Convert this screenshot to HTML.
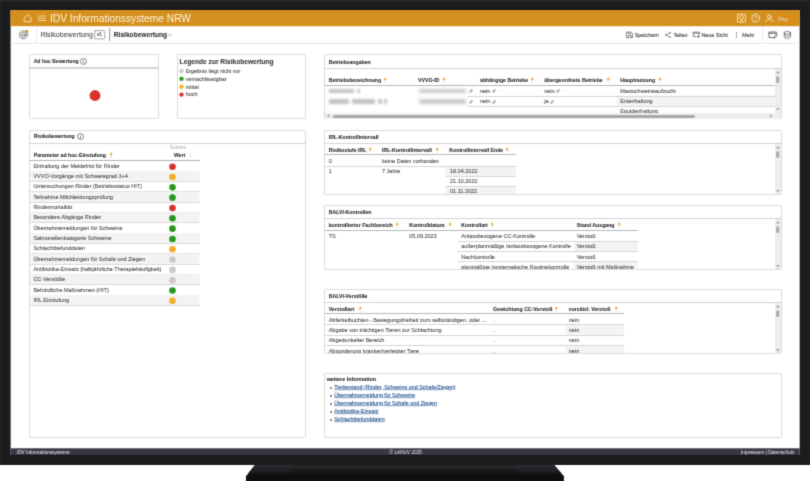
<!DOCTYPE html>
<html lang="de">
<head>
<meta charset="utf-8">
<title>IDV Informationssysteme NRW – Risikobewertung</title>
<style>
html,body{margin:0;padding:0;background:#fff;}
body{width:810px;height:481px;position:relative;overflow:hidden;font-family:"Liberation Sans",sans-serif;}
*{box-sizing:border-box;}
.abs,.t,.b,.h,.p,.ln,.bg,.ar,.lk{position:absolute;}
.bezel{left:0;top:0;width:810px;height:464.5px;background:#1c1c1e;border-top:1px solid #2b2d2d;border-left:1px solid #242526;}
.screen{left:10.5px;top:10px;width:790px;height:445px;background:#fff;outline:1px solid #15151d;}
.obar{left:10.5px;top:10px;width:790px;height:16.2px;background:#d4901f;}
.tbar{left:10.5px;top:26px;width:790px;height:17.3px;background:#fff;border-bottom:1px solid #e2e2e2;}
.foot{left:10.5px;top:448.3px;width:790px;height:6.7px;background:#383845;}
.t{white-space:nowrap;font-size:5.5px;line-height:8px;color:#565656;-webkit-text-stroke:0.12px #565656;}
.b{white-space:nowrap;font-size:5.2px;line-height:8px;color:#2b2b30;font-weight:bold;-webkit-text-stroke:0.08px #2b2b30;}
.p{border:1px solid #dcdcdc;background:#fff;border-radius:1.2px;}
.ln{height:1px;background:#dcdcdc;}
.hd{background:#d4d4d4;height:1.4px;}
.bg{background:#f3f3f3;}
.t,.b,.lk{transform:scaleY(1.1);transform-origin:50% 58%;}
.big{transform:none;}
.ar{width:2.4px;height:4.6px;}
.lk{white-space:nowrap;font-size:5.5px;line-height:8px;color:#24528f;-webkit-text-stroke:0.1px #24528f;text-decoration:underline;text-decoration-thickness:0.4px;text-underline-offset:0.2px;text-decoration-color:rgba(45,95,158,0.55);}
.ft{color:#e8e8ee;font-size:4.74px;line-height:7px;-webkit-text-stroke:0;}
svg{position:absolute;overflow:visible;}
</style>
</head>
<body>
<svg width="0" height="0" style="position:absolute"><defs><filter id="soft" x="0" y="0" width="100%" height="100%" color-interpolation-filters="sRGB"><feConvolveMatrix order="3" kernelMatrix="0.0192 0.1001 0.0192 0.1001 0.5228 0.1001 0.0192 0.1001 0.0192" edgeMode="duplicate" preserveAlpha="false"/></filter></defs></svg>
<div class="abs" style="left:0;top:0;width:810px;height:481px;filter:url(#soft);">
<svg style="left:0;top:0" width="810" height="481" viewBox="0 0 810 481">
<defs>
<linearGradient id="sg" gradientUnits="userSpaceOnUse" x1="0" y1="464.6" x2="0" y2="481"><stop offset="0" stop-color="#262629"/><stop offset="0.24" stop-color="#242427"/><stop offset="0.28" stop-color="#1b1b1e"/><stop offset="0.52" stop-color="#17171a"/><stop offset="0.64" stop-color="#0e0e11"/><stop offset="1" stop-color="#111114"/></linearGradient>
<linearGradient id="sl" gradientUnits="userSpaceOnUse" x1="0" y1="464" x2="0" y2="473.5"><stop offset="0" stop-color="#2f2f34"/><stop offset="1" stop-color="#18181b"/></linearGradient>
</defs>
<polygon points="255.7,464 553.3,464 563.9,476.2 563.9,488 246,488 246,476.2" fill="url(#sg)"/>
<polygon points="255.7,464 291.5,464 291.5,473.5 248.1,473.5" fill="url(#sl)"/>
<polygon points="518.5,464 553.3,464 561.6,473.5 518.5,473.5" fill="url(#sl)"/>
</svg>
<svg style="left:0;top:0" width="810" height="481" viewBox="0 0 810 481">
<rect x="-6" y="-6" width="822" height="471" fill="#1c1c1e"/>
<rect x="-6" y="-6" width="822" height="7.2" fill="#2c2e2e"/>
<rect x="-6" y="1.2" width="7" height="463.8" fill="#242527"/>
<rect x="809" y="1.2" width="7" height="463.8" fill="#212123"/>
<rect x="9.8" y="9.3" width="790.7" height="446.4" fill="#14141d"/>
<rect x="10.6" y="10" width="789.1" height="445" fill="#ffffff"/>
<rect x="10.6" y="10" width="789.1" height="16.2" fill="#d4901f"/>
<rect x="10.6" y="42.8" width="789.1" height="0.9" fill="#e3e3e3"/>
<rect x="10.6" y="448.3" width="789.1" height="6.7" fill="#383845"/>
</svg>
<svg style="left:0;top:0" width="810" height="60" viewBox="0 0 810 60" fill="none" stroke="#fbe8c6" stroke-width="0.9" stroke-linejoin="round" stroke-linecap="round">
<path d="M24.5 17.6 L27.7 14.9 L30.9 17.6 V21.7 H24.5 Z" stroke-width="0.8"/>
<path d="M38.2 16.1 H45.6 M38.2 18.35 H45.6 M38.2 20.6 H45.6" stroke-width="0.8"/>
<rect x="737.5" y="14.3" width="8" height="7.8" rx="0.5"/>
<circle cx="741.5" cy="17.7" r="1.9" stroke-width="0.8"/><path d="M741.5 19.6 V21 M740.4 21 H742.6" stroke-width="0.8"/>
<circle cx="755.7" cy="18.2" r="4"/>
<path d="M754.5 17.1 C754.5 15.7 756.9 15.7 756.9 17.1 C756.9 18 755.7 18 755.7 19.1 M755.7 20.3 V20.5" stroke-width="0.75"/>
<circle cx="769.3" cy="16.6" r="1.8"/><path d="M765.7 21.6 C765.7 19.7 767.4 19.2 769.3 19.2 C771.2 19.2 772.9 19.7 772.9 21.6"/>
</svg>
<div class="t" style="left:49.9px;top:12px;font-size:10px;line-height:13px;color:#fdf3df;-webkit-text-stroke:0;transform:scaleX(1.02);transform-origin:0 50%;">IDV Informationssysteme NRW</div>
<svg style="left:0;top:0" width="810" height="30" viewBox="0 0 810 30"><rect x="774.6" y="14.9" width="18.4" height="8" rx="4" fill="#de8c12"/></svg>
<div class="b" style="left:777.8px;top:14.9px;font-size:5.6px;color:#fbe9cc;transform:scale(0.86,1.05);transform-origin:0 50%;">Disy</div>
<svg style="left:0;top:0" width="810" height="60" viewBox="0 0 810 60" fill="none" stroke="#666" stroke-width="0.8" stroke-linejoin="round" stroke-linecap="round">
<circle cx="23.5" cy="34.8" r="4.1" stroke="#6a6a70" stroke-width="0.7"/><circle cx="23.5" cy="34.8" r="2.6" stroke="#6a6a70" stroke-width="0.7"/><circle cx="23.5" cy="34.8" r="1.1" stroke="#6a6a70" stroke-width="0.7"/>
<circle cx="26.8" cy="31.4" r="1.5" fill="#e08a12" stroke="none"/>
<path d="M36.6 26.5 V43" stroke="#e6e6e6" stroke-width="0.8"/>
<rect x="94.7" y="30.6" width="10" height="8.3" rx="0.8" stroke="#808080" stroke-width="0.7"/>
<path d="M109.7 28.4 V40.8" stroke="#7c7c7c" stroke-width="0.8"/>
<path d="M168.4 34.3 L169.9 35.7 L171.4 34.3" stroke="#666" stroke-width="0.6"/>
<path d="M626.8 32.1 H631.3 L632.6 33.4 V37.6 H626.8 Z M628 32.1 V33.8 H630.8 V32.1 M628 37.6 V35.4 H631.4 V37.6" stroke-width="0.7"/>
<circle cx="670" cy="32.7" r="0.75" fill="#666" stroke="none"/><circle cx="665.9" cy="34.9" r="0.75" fill="#666" stroke="none"/><circle cx="670" cy="37.1" r="0.75" fill="#666" stroke="none"/>
<path d="M670 32.7 L665.9 34.9 L670 37.1" stroke-width="0.7"/>
<path d="M696.3 36.4 H693.2 V32.2 H699.4 V34.6 M693.2 33.2 H699.4 M698.5 35.4 V37.6 M697.4 36.5 H699.6" stroke-width="0.8"/>
<circle cx="736.5" cy="32.7" r="0.6" fill="#666" stroke="none"/><circle cx="736.5" cy="34.8" r="0.6" fill="#666" stroke="none"/><circle cx="736.5" cy="36.9" r="0.6" fill="#666" stroke="none"/>
<path d="M762.7 26.5 V43" stroke="#e2e2e2" stroke-width="0.8"/>
<path d="M773.3 37.5 H769 V32 H776.3 V33.6 M769 33.3 H776.3 M774.2 37.9 L774.5 36.5 L776.6 34.4 L777.4 35.2 L775.3 37.4 Z" stroke="#555" stroke-width="0.85"/>
<ellipse cx="787.4" cy="32.8" rx="3.1" ry="1.35" stroke="#555" stroke-width="0.75"/>
<path d="M784.3 32.8 V36.9 C784.3 38.7 790.5 38.7 790.5 36.9 V32.8 M784.3 34.8 C784.3 36.6 790.5 36.6 790.5 34.8" stroke="#555" stroke-width="0.75"/>
</svg>
<div class="t big" style="left:40.4px;top:29.7px;font-size:7.1px;line-height:10px;color:#555;">Risikobewertung</div>
<div class="t" style="left:97px;top:31.3px;font-size:4.7px;color:#555;-webkit-text-stroke:0.2px #555;">v1</div>
<div class="b big" style="left:113.8px;top:29.7px;font-size:6.62px;line-height:10px;color:#333;">Risikobewertung</div>
<div class="t" style="left:634.8px;top:30.8px;font-size:5.37px;color:#5c5c5c;-webkit-text-stroke:0.2px #5c5c5c;">Speichern</div>
<div class="t" style="left:673.4px;top:30.8px;font-size:5.37px;color:#5c5c5c;-webkit-text-stroke:0.2px #5c5c5c;">Teilen</div>
<div class="t" style="left:701.5px;top:30.8px;font-size:5.37px;color:#5c5c5c;-webkit-text-stroke:0.2px #5c5c5c;">Neue Sicht</div>
<div class="t" style="left:742.2px;top:30.8px;font-size:5.37px;color:#5c5c5c;-webkit-text-stroke:0.2px #5c5c5c;">Mehr</div>
<div class="p" style="left:29.3px;top:54.2px;width:130px;height:65.3px;"></div>
<div class="ln hd" style="left:29.3px;top:67.3px;width:130px;"></div>
<div class="b" style="left:33.7px;top:57.2px;font-size:5.1px;">Ad hoc Bewertung</div>
<svg style="left:80.1px;top:57.7px" width="7" height="7" viewBox="0 0 7 7" fill="none" stroke="#4a4a4a" stroke-width="0.7"><circle cx="3.5" cy="3.5" r="2.95"/><path d="M3.5 3.1 V5.2 M3.5 1.8 V2.3" stroke-width="0.7"/></svg>
<div class="p" style="left:177px;top:54.2px;width:129.3px;height:65.3px;"></div>
<div class="b big" style="left:179.6px;top:56.7px;font-size:6.62px;line-height:10px;color:#38383f;">Legende zur Risikobewertung</div>
<div class="t" style="left:185.7px;top:66.80px;font-size:5.42px;">Ergebnis liegt nicht vor</div>
<div class="t" style="left:185.7px;top:74.67px;font-size:5.42px;">vernachlässigbar</div>
<div class="t" style="left:185.7px;top:82.54px;font-size:5.42px;">mittel</div>
<div class="t" style="left:185.7px;top:90.41px;font-size:5.42px;">hoch</div>
<div class="p" style="left:29.3px;top:130.3px;width:277px;height:307.6px;"></div>
<div class="ln hd" style="left:29.3px;top:143px;width:277px;"></div>
<div class="b" style="left:33.7px;top:132.4px;font-size:5.1px;">Risikobewertung</div>
<svg style="left:76.8px;top:132.9px" width="7" height="7" viewBox="0 0 7 7" fill="none" stroke="#4a4a4a" stroke-width="0.7"><circle cx="3.5" cy="3.5" r="2.95"/><path d="M3.5 3.1 V5.2 M3.5 1.8 V2.3" stroke-width="0.7"/></svg>
<div class="t" style="left:170.1px;top:143.7px;font-size:4.64px;color:#9e9e9e;-webkit-text-stroke:0;">Summe</div>
<div class="b" style="left:33.7px;top:151.2px;">Parameter ad hoc-Einstufung</div>
<svg class="ar" style="left:109.5px;top:152.9px" viewBox="0 0 2.4 4.6"><path d="M1.2 -0.8 L2.75 1.7 H-0.35 Z" fill="#f09a1c"/><rect x="0.6" y="1.6" width="1.2" height="0.9" fill="#f2a636"/><rect x="0.7" y="2.5" width="1" height="2.1" fill="#d9d9d9"/></svg>
<div class="b" style="left:174px;top:151.2px;">Wert</div>
<svg style="left:190.2px;top:152.8px" width="1.4" height="4.4" viewBox="0 0 1.4 4.4"><path d="M0.7 0 L1.4 1.3 H0 Z M0.7 4.4 L1.4 3.1 H0 Z" fill="#d0d0d0"/><rect x="0.45" y="1.3" width="0.5" height="1.8" fill="#d8d8d8"/></svg>
<div class="ln" style="left:29.8px;top:159.9px;width:169.8px;background:#b2b2b2;"></div>
<div class="ln" style="left:30.3px;top:170.72px;width:169.3px;background:#dadada;"></div>
<div class="t" style="left:33.4px;top:161.66px;">Einhaltung der Meldefrist für Rinder</div>
<svg style="left:0;top:0" width="810" height="481" viewBox="0 0 810 481"><rect x="30.3" y="171.02" width="169.3" height="10.32" fill="#f3f3f3"/></svg>
<div class="ln" style="left:30.3px;top:181.04px;width:169.3px;background:#dadada;"></div>
<div class="t" style="left:33.4px;top:171.98px;">VVVO-Vorgänge mit Schweregrad 3+4</div>
<div class="ln" style="left:30.3px;top:191.36px;width:169.3px;background:#dadada;"></div>
<div class="t" style="left:33.4px;top:182.30px;">Untersuchungen Rinder (Betriebsstatus HIT)</div>
<svg style="left:0;top:0" width="810" height="481" viewBox="0 0 810 481"><rect x="30.3" y="191.66" width="169.3" height="10.32" fill="#f3f3f3"/></svg>
<div class="ln" style="left:30.3px;top:201.68px;width:169.3px;background:#dadada;"></div>
<div class="t" style="left:33.4px;top:192.62px;">Teilnahme Milchleistungsprüfung</div>
<div class="ln" style="left:30.3px;top:212.00px;width:169.3px;background:#dadada;"></div>
<div class="t" style="left:33.4px;top:202.94px;">Rindermortalität</div>
<svg style="left:0;top:0" width="810" height="481" viewBox="0 0 810 481"><rect x="30.3" y="212.30" width="169.3" height="10.32" fill="#f3f3f3"/></svg>
<div class="ln" style="left:30.3px;top:222.32px;width:169.3px;background:#dadada;"></div>
<div class="t" style="left:33.4px;top:213.26px;">Besondere Abgänge Rinder</div>
<div class="ln" style="left:30.3px;top:232.64px;width:169.3px;background:#dadada;"></div>
<div class="t" style="left:33.4px;top:223.58px;">Übernahmemeldungen für Schweine</div>
<svg style="left:0;top:0" width="810" height="481" viewBox="0 0 810 481"><rect x="30.3" y="232.94" width="169.3" height="10.32" fill="#f3f3f3"/></svg>
<div class="ln" style="left:30.3px;top:242.96px;width:169.3px;background:#dadada;"></div>
<div class="t" style="left:33.4px;top:233.90px;">Salmonellenkategorie Schweine</div>
<div class="ln" style="left:30.3px;top:253.28px;width:169.3px;background:#dadada;"></div>
<div class="t" style="left:33.4px;top:244.22px;">Schlachtbefunddaten</div>
<svg style="left:0;top:0" width="810" height="481" viewBox="0 0 810 481"><rect x="30.3" y="253.58" width="169.3" height="10.32" fill="#f3f3f3"/></svg>
<div class="ln" style="left:30.3px;top:263.60px;width:169.3px;background:#dadada;"></div>
<div class="t" style="left:33.4px;top:254.54px;">Übernahmemeldungen für Schafe und Ziegen</div>
<div class="ln" style="left:30.3px;top:273.92px;width:169.3px;background:#dadada;"></div>
<div class="t" style="left:33.4px;top:264.86px;">Antibiotika-Einsatz (halbjährliche Therapiehäufigkeit)</div>
<svg style="left:0;top:0" width="810" height="481" viewBox="0 0 810 481"><rect x="30.3" y="274.22" width="169.3" height="10.32" fill="#f3f3f3"/></svg>
<div class="ln" style="left:30.3px;top:284.24px;width:169.3px;background:#dadada;"></div>
<div class="t" style="left:33.4px;top:275.18px;">CC-Verstöße</div>
<div class="ln" style="left:30.3px;top:294.56px;width:169.3px;background:#dadada;"></div>
<div class="t" style="left:33.4px;top:285.50px;">Behördliche Maßnahmen (HIT)</div>
<svg style="left:0;top:0" width="810" height="481" viewBox="0 0 810 481"><rect x="30.3" y="294.86" width="169.3" height="10.32" fill="#f3f3f3"/></svg>
<div class="ln" style="left:30.3px;top:304.88px;width:169.3px;background:#dadada;"></div>
<div class="t" style="left:33.4px;top:295.82px;">IRL Einstufung</div>
<div class="p" style="left:324.3px;top:54.2px;width:457.3px;height:65.3px;"></div>
<div class="ln hd" style="left:324.3px;top:67.8px;width:457.3px;"></div>
<div class="b" style="left:328.7px;top:57.70px;">Betriebsangaben</div>
<div class="b" style="left:328.7px;top:76.00px;">Betriebsbezeichnung</div>
<svg class="ar" style="left:384.4px;top:78.1px" viewBox="0 0 2.4 4.6"><path d="M1.2 -0.8 L2.75 1.7 H-0.35 Z" fill="#f09a1c"/><rect x="0.6" y="1.6" width="1.2" height="0.9" fill="#f2a636"/><rect x="0.7" y="2.5" width="1" height="2.1" fill="#d9d9d9"/></svg>
<div class="b" style="left:418px;top:76.00px;">VVVO-ID</div>
<svg class="ar" style="left:443.4px;top:78.1px" viewBox="0 0 2.4 4.6"><path d="M1.2 -0.8 L2.75 1.7 H-0.35 Z" fill="#f09a1c"/><rect x="0.6" y="1.6" width="1.2" height="0.9" fill="#f2a636"/><rect x="0.7" y="2.5" width="1" height="2.1" fill="#d9d9d9"/></svg>
<div class="b" style="left:480px;top:76.00px;">abhängige Betriebe</div>
<svg class="ar" style="left:530.9px;top:78.1px" viewBox="0 0 2.4 4.6"><path d="M1.2 -0.8 L2.75 1.7 H-0.35 Z" fill="#f09a1c"/><rect x="0.6" y="1.6" width="1.2" height="0.9" fill="#f2a636"/><rect x="0.7" y="2.5" width="1" height="2.1" fill="#d9d9d9"/></svg>
<div class="b" style="left:544.2px;top:76.00px;">übergeordnete Betriebe</div>
<svg class="ar" style="left:606.9px;top:78.1px" viewBox="0 0 2.4 4.6"><path d="M1.2 -0.8 L2.75 1.7 H-0.35 Z" fill="#f09a1c"/><rect x="0.6" y="1.6" width="1.2" height="0.9" fill="#f2a636"/><rect x="0.7" y="2.5" width="1" height="2.1" fill="#d9d9d9"/></svg>
<div class="b" style="left:620.2px;top:76.00px;">Hauptnutzung</div>
<svg class="ar" style="left:659.0px;top:78.1px" viewBox="0 0 2.4 4.6"><path d="M1.2 -0.8 L2.75 1.7 H-0.35 Z" fill="#f09a1c"/><rect x="0.6" y="1.6" width="1.2" height="0.9" fill="#f2a636"/><rect x="0.7" y="2.5" width="1" height="2.1" fill="#d9d9d9"/></svg>
<div class="ln" style="left:324.8px;top:85.2px;width:450.2px;background:#b8b8b8;"></div>
<svg style="left:0;top:0" width="810" height="481" viewBox="0 0 810 481"><rect x="617" y="95.5" width="157.8" height="10.2" fill="#f3f3f3"/></svg>
<div class="ln" style="left:467px;top:95.6px;width:308px;background:#d6d6d6;"></div>
<div class="ln" style="left:467px;top:105.9px;width:308px;background:#d6d6d6;"></div>
<div class="abs" style="left:329px;top:88.90px;width:25px;height:4.4px;background:#c4c4c4;filter:blur(1.2px);"></div>
<div class="abs" style="left:356.5px;top:88.90px;width:3px;height:4.4px;background:#c4c4c4;filter:blur(1.2px);"></div>
<div class="abs" style="left:329px;top:99.20px;width:20px;height:4.4px;background:#c4c4c4;filter:blur(1.2px);"></div>
<div class="abs" style="left:352px;top:99.20px;width:23px;height:4.4px;background:#c4c4c4;filter:blur(1.2px);"></div>
<div class="abs" style="left:377.5px;top:99.20px;width:4px;height:4.4px;background:#c4c4c4;filter:blur(1.2px);"></div>
<div class="abs" style="left:384px;top:99.20px;width:3px;height:4.4px;background:#c4c4c4;filter:blur(1.2px);"></div>
<div class="abs" style="left:418px;top:87.70px;width:49px;height:6.6px;background:#e9e9e9;filter:blur(0.8px);"></div>
<div class="abs" style="left:421px;top:89.70px;width:44px;height:2.6px;background:#c6c6c6;filter:blur(1.0px);"></div>
<div class="abs" style="left:418px;top:98.00px;width:49px;height:6.6px;background:#e9e9e9;filter:blur(0.8px);"></div>
<div class="abs" style="left:421px;top:100.00px;width:44px;height:2.6px;background:#c6c6c6;filter:blur(1.0px);"></div>
<svg style="left:468.5px;top:89.2px" width="4" height="4" viewBox="0 0 4 4" fill="none" stroke="#6c6c6c" stroke-width="0.5"><ellipse cx="1.45" cy="2.55" rx="1.15" ry="0.72" transform="rotate(-45 1.45 2.55)"/><ellipse cx="2.55" cy="1.45" rx="1.15" ry="0.72" transform="rotate(-45 2.55 1.45)"/></svg>
<div class="t" style="left:480px;top:86.90px;">nein</div>
<svg style="left:491.9px;top:89.2px" width="4" height="4" viewBox="0 0 4 4" fill="none" stroke="#6c6c6c" stroke-width="0.5"><ellipse cx="1.45" cy="2.55" rx="1.15" ry="0.72" transform="rotate(-45 1.45 2.55)"/><ellipse cx="2.55" cy="1.45" rx="1.15" ry="0.72" transform="rotate(-45 2.55 1.45)"/></svg>
<svg style="left:468.5px;top:99.5px" width="4" height="4" viewBox="0 0 4 4" fill="none" stroke="#6c6c6c" stroke-width="0.5"><ellipse cx="1.45" cy="2.55" rx="1.15" ry="0.72" transform="rotate(-45 1.45 2.55)"/><ellipse cx="2.55" cy="1.45" rx="1.15" ry="0.72" transform="rotate(-45 2.55 1.45)"/></svg>
<div class="t" style="left:480px;top:97.20px;">nein</div>
<svg style="left:491.9px;top:99.5px" width="4" height="4" viewBox="0 0 4 4" fill="none" stroke="#6c6c6c" stroke-width="0.5"><ellipse cx="1.45" cy="2.55" rx="1.15" ry="0.72" transform="rotate(-45 1.45 2.55)"/><ellipse cx="2.55" cy="1.45" rx="1.15" ry="0.72" transform="rotate(-45 2.55 1.45)"/></svg>
<div class="t" style="left:544.2px;top:86.90px;">nein</div>
<svg style="left:556px;top:89.2px" width="4" height="4" viewBox="0 0 4 4" fill="none" stroke="#6c6c6c" stroke-width="0.5"><ellipse cx="1.45" cy="2.55" rx="1.15" ry="0.72" transform="rotate(-45 1.45 2.55)"/><ellipse cx="2.55" cy="1.45" rx="1.15" ry="0.72" transform="rotate(-45 2.55 1.45)"/></svg>
<div class="t" style="left:544.2px;top:97.20px;">ja</div>
<svg style="left:550.2px;top:99.5px" width="4" height="4" viewBox="0 0 4 4" fill="none" stroke="#6c6c6c" stroke-width="0.5"><ellipse cx="1.45" cy="2.55" rx="1.15" ry="0.72" transform="rotate(-45 1.45 2.55)"/><ellipse cx="2.55" cy="1.45" rx="1.15" ry="0.72" transform="rotate(-45 2.55 1.45)"/></svg>
<div class="t" style="left:620.2px;top:86.90px;">Mastschweineaufzucht</div>
<div class="t" style="left:620.2px;top:97.20px;">Entenhaltung</div>
<div class="abs" style="left:617px;top:106.5px;width:158px;height:6.5px;overflow:hidden;"><div class="t" style="left:3.2px;top:0.7px;">Equidenhaltung</div></div>
<div class="abs" style="left:774.8px;top:68.6px;width:6.1px;height:44.4px;background:#ededed;"></div>
<svg style="left:0;top:0" width="810" height="481" viewBox="0 0 810 481"><rect x="776.1" y="76.0" width="3.2" height="7" rx="1.6" fill="#adadad"/></svg>
<svg style="left:775.8px;top:70.6px" width="3.8" height="2.4" viewBox="0 0 3.8 2.4"><path d="M0 2.4 L1.9 0 L3.8 2.4 Z" fill="#a3a3a3"/></svg>
<svg style="left:775.8px;top:108.4px" width="3.8" height="2.4" viewBox="0 0 3.8 2.4"><path d="M0 0 L1.9 2.4 L3.8 0 Z" fill="#a3a3a3"/></svg>
<div class="abs" style="left:324.8px;top:113px;width:456.1px;height:6px;background:#ededed;"></div>
<div class="abs" style="left:333px;top:114.5px;width:361.5px;height:3px;border-radius:1.5px;background:#a9a9a9;"></div>
<svg style="left:327.1px;top:114.1px" width="2.4" height="3.8" viewBox="0 0 2.4 3.8"><path d="M2.4 0 L0 1.9 L2.4 3.8 Z" fill="#a3a3a3"/></svg>
<svg style="left:769.8px;top:114.1px" width="2.4" height="3.8" viewBox="0 0 2.4 3.8"><path d="M0 0 L2.4 1.9 L0 3.8 Z" fill="#a3a3a3"/></svg>
<div class="p" style="left:324.3px;top:130.3px;width:457.3px;height:64.4px;"></div>
<div class="ln hd" style="left:324.3px;top:142.8px;width:457.3px;"></div>
<div class="b" style="left:328.7px;top:133.00px;">IRL-Kontrollintervall</div>
<div class="b" style="left:328.7px;top:145.60px;">Risikostufe IRL</div>
<svg class="ar" style="left:369.0px;top:147.7px" viewBox="0 0 2.4 4.6"><path d="M1.2 -0.8 L2.75 1.7 H-0.35 Z" fill="#f09a1c"/><rect x="0.6" y="1.6" width="1.2" height="0.9" fill="#f2a636"/><rect x="0.7" y="2.5" width="1" height="2.1" fill="#d9d9d9"/></svg>
<div class="b" style="left:382px;top:145.60px;">IRL-Kontrollintervall</div>
<svg class="ar" style="left:435.6px;top:147.7px" viewBox="0 0 2.4 4.6"><path d="M1.2 -0.8 L2.75 1.7 H-0.35 Z" fill="#f09a1c"/><rect x="0.6" y="1.6" width="1.2" height="0.9" fill="#f2a636"/><rect x="0.7" y="2.5" width="1" height="2.1" fill="#d9d9d9"/></svg>
<div class="b" style="left:449.3px;top:145.60px;">Kontrollintervall Ende</div>
<svg class="ar" style="left:506.0px;top:147.7px" viewBox="0 0 2.4 4.6"><path d="M1.2 -0.8 L2.75 1.7 H-0.35 Z" fill="#f09a1c"/><rect x="0.6" y="1.6" width="1.2" height="0.9" fill="#f2a636"/><rect x="0.7" y="2.5" width="1" height="2.1" fill="#d9d9d9"/></svg>
<div class="ln" style="left:324.8px;top:154.4px;width:190.8px;background:#b8b8b8;"></div>
<svg style="left:0;top:0" width="810" height="481" viewBox="0 0 810 481"><rect x="445.5" y="166.2" width="70.1" height="9.8" fill="#f3f3f3"/></svg>
<svg style="left:0;top:0" width="810" height="481" viewBox="0 0 810 481"><rect x="445.5" y="186.6" width="70.1" height="7.5" fill="#f3f3f3"/></svg>
<div class="ln" style="left:324.8px;top:165.5px;width:190.8px;background:#d6d6d6;"></div>
<div class="ln" style="left:445.5px;top:175.8px;width:70.1px;background:#d6d6d6;"></div>
<div class="ln" style="left:445.5px;top:186px;width:70.1px;background:#d6d6d6;"></div>
<div class="t" style="left:328.7px;top:156.50px;">0</div>
<div class="t" style="left:382px;top:156.50px;">keine Daten vorhanden</div>
<div class="t" style="left:328.7px;top:166.90px;">1</div>
<div class="t" style="left:382px;top:166.90px;">7 Jahre</div>
<div class="t" style="left:450px;top:166.90px;">18.04.2022</div>
<div class="t" style="left:450px;top:177.20px;">21.10.2022</div>
<div class="t" style="left:450px;top:187.40px;">01.11.2022</div>
<div class="abs" style="left:774.8px;top:143.6px;width:6.1px;height:50.6px;background:#ededed;"></div>
<svg style="left:0;top:0" width="810" height="481" viewBox="0 0 810 481"><rect x="776.1" y="151.0" width="3.2" height="7" rx="1.6" fill="#adadad"/></svg>
<svg style="left:775.8px;top:145.6px" width="3.8" height="2.4" viewBox="0 0 3.8 2.4"><path d="M0 2.4 L1.9 0 L3.8 2.4 Z" fill="#a3a3a3"/></svg>
<svg style="left:775.8px;top:189.6px" width="3.8" height="2.4" viewBox="0 0 3.8 2.4"><path d="M0 0 L1.9 2.4 L3.8 0 Z" fill="#a3a3a3"/></svg>
<div class="p" style="left:324.3px;top:205.3px;width:457.3px;height:64.4px;"></div>
<div class="ln hd" style="left:324.3px;top:217.8px;width:457.3px;"></div>
<div class="b" style="left:328.7px;top:208.10px;">BALVI-Kontrollen</div>
<div class="b" style="left:328.7px;top:220.80px;">kontrollierter Fachbereich</div>
<svg class="ar" style="left:396.4px;top:222.9px" viewBox="0 0 2.4 4.6"><path d="M1.2 -0.8 L2.75 1.7 H-0.35 Z" fill="#f09a1c"/><rect x="0.6" y="1.6" width="1.2" height="0.9" fill="#f2a636"/><rect x="0.7" y="2.5" width="1" height="2.1" fill="#d9d9d9"/></svg>
<div class="b" style="left:409.2px;top:220.80px;">Kontrolldatum</div>
<svg class="ar" style="left:448.9px;top:222.9px" viewBox="0 0 2.4 4.6"><path d="M1.2 -0.8 L2.75 1.7 H-0.35 Z" fill="#f09a1c"/><rect x="0.6" y="1.6" width="1.2" height="0.9" fill="#f2a636"/><rect x="0.7" y="2.5" width="1" height="2.1" fill="#d9d9d9"/></svg>
<div class="b" style="left:461.3px;top:220.80px;">Kontrollart</div>
<svg class="ar" style="left:491.4px;top:222.9px" viewBox="0 0 2.4 4.6"><path d="M1.2 -0.8 L2.75 1.7 H-0.35 Z" fill="#f09a1c"/><rect x="0.6" y="1.6" width="1.2" height="0.9" fill="#f2a636"/><rect x="0.7" y="2.5" width="1" height="2.1" fill="#d9d9d9"/></svg>
<div class="b" style="left:576.7px;top:220.80px;">Stand Ausgang</div>
<svg class="ar" style="left:617.6px;top:222.9px" viewBox="0 0 2.4 4.6"><path d="M1.2 -0.8 L2.75 1.7 H-0.35 Z" fill="#f09a1c"/><rect x="0.6" y="1.6" width="1.2" height="0.9" fill="#f2a636"/><rect x="0.7" y="2.5" width="1" height="2.1" fill="#d9d9d9"/></svg>
<div class="ln" style="left:324.8px;top:229.8px;width:312.8px;background:#b8b8b8;"></div>
<svg style="left:0;top:0" width="810" height="481" viewBox="0 0 810 481"><rect x="573.7" y="241.2" width="63.9" height="9.8" fill="#f3f3f3"/></svg>
<svg style="left:0;top:0" width="810" height="481" viewBox="0 0 810 481"><rect x="573.7" y="261.9" width="63.9" height="7.3" fill="#f3f3f3"/></svg>
<div class="ln" style="left:458px;top:240.5px;width:179.6px;background:#d6d6d6;"></div>
<div class="ln" style="left:458px;top:250.9px;width:179.6px;background:#d6d6d6;"></div>
<div class="ln" style="left:458px;top:261.2px;width:179.6px;background:#d6d6d6;"></div>
<div class="t" style="left:328.7px;top:231.90px;">TS</div>
<div class="t" style="left:409.2px;top:231.90px;">05.09.2022</div>
<div class="t" style="left:461.3px;top:231.90px;">Anlassbezogene CC-Kontrolle</div>
<div class="t" style="left:576.7px;top:231.90px;">Verstoß</div>
<div class="t" style="left:461.3px;top:242.25px;">außerplanmäßige /anlassbezogene Kontrolle</div>
<div class="t" style="left:576.7px;top:242.25px;">Verstoß</div>
<div class="t" style="left:461.3px;top:252.60px;">Nachkontrolle</div>
<div class="t" style="left:576.7px;top:252.60px;">Verstoß</div>
<div class="abs" style="left:458px;top:262.2px;width:180px;height:7.2px;overflow:hidden;"><div class="t" style="left:3.3px;top:0.8px;">planmäßige /systematische Routinekontrolle</div><div class="t" style="left:118.7px;top:0.8px;">Verstoß mit Maßnahme</div></div>
<div class="abs" style="left:774.8px;top:218.6px;width:6.1px;height:50.6px;background:#ededed;"></div>
<svg style="left:0;top:0" width="810" height="481" viewBox="0 0 810 481"><rect x="776.1" y="226.0" width="3.2" height="7" rx="1.6" fill="#adadad"/></svg>
<svg style="left:775.8px;top:220.6px" width="3.8" height="2.4" viewBox="0 0 3.8 2.4"><path d="M0 2.4 L1.9 0 L3.8 2.4 Z" fill="#a3a3a3"/></svg>
<svg style="left:775.8px;top:264.6px" width="3.8" height="2.4" viewBox="0 0 3.8 2.4"><path d="M0 0 L1.9 2.4 L3.8 0 Z" fill="#a3a3a3"/></svg>
<div class="p" style="left:324.3px;top:289.3px;width:457.3px;height:64.4px;"></div>
<div class="ln hd" style="left:324.3px;top:302.0px;width:457.3px;"></div>
<div class="b" style="left:328.7px;top:292.30px;">BALVI-Verstöße</div>
<div class="b" style="left:328.7px;top:304.60px;">Verstoßart</div>
<svg class="ar" style="left:358.9px;top:306.7px" viewBox="0 0 2.4 4.6"><path d="M1.2 -0.8 L2.75 1.7 H-0.35 Z" fill="#f09a1c"/><rect x="0.6" y="1.6" width="1.2" height="0.9" fill="#f2a636"/><rect x="0.7" y="2.5" width="1" height="2.1" fill="#d9d9d9"/></svg>
<div class="b" style="left:493px;top:304.60px;">Gewichtung CC-Verstoß</div>
<svg class="ar" style="left:555.4px;top:306.7px" viewBox="0 0 2.4 4.6"><path d="M1.2 -0.8 L2.75 1.7 H-0.35 Z" fill="#f09a1c"/><rect x="0.6" y="1.6" width="1.2" height="0.9" fill="#f2a636"/><rect x="0.7" y="2.5" width="1" height="2.1" fill="#d9d9d9"/></svg>
<div class="b" style="left:568.8px;top:304.60px;">vorsätzl. Verstoß</div>
<svg class="ar" style="left:614.6px;top:306.7px" viewBox="0 0 2.4 4.6"><path d="M1.2 -0.8 L2.75 1.7 H-0.35 Z" fill="#f09a1c"/><rect x="0.6" y="1.6" width="1.2" height="0.9" fill="#f2a636"/><rect x="0.7" y="2.5" width="1" height="2.1" fill="#d9d9d9"/></svg>
<div class="ln" style="left:324.8px;top:313px;width:299.2px;background:#b8b8b8;"></div>
<svg style="left:0;top:0" width="810" height="481" viewBox="0 0 810 481"><rect x="565.4" y="324.9" width="58.6" height="9.8" fill="#f3f3f3"/></svg>
<svg style="left:0;top:0" width="810" height="481" viewBox="0 0 810 481"><rect x="565.4" y="345.6" width="58.6" height="7.6" fill="#f3f3f3"/></svg>
<div class="ln" style="left:324.8px;top:324.2px;width:299.2px;background:#d6d6d6;"></div>
<div class="ln" style="left:324.8px;top:334.6px;width:299.2px;background:#d6d6d6;"></div>
<div class="ln" style="left:324.8px;top:345px;width:299.2px;background:#d6d6d6;"></div>
<div class="t" style="left:328.7px;top:315.70px;">Abferkelbuchten - Bewegungsfreiheit zum selbständigen. oder ...</div>
<div class="t" style="left:493.6px;top:315.70px;">.</div>
<div class="t" style="left:568.8px;top:315.70px;">nein</div>
<div class="t" style="left:328.7px;top:326.00px;">Abgabe von trächtigen Tieren zur Schlachtung</div>
<div class="t" style="left:493.6px;top:326.00px;">.</div>
<div class="t" style="left:568.8px;top:326.00px;">nein</div>
<div class="t" style="left:328.7px;top:336.30px;">Abgedunkelter Bereich</div>
<div class="t" style="left:493.6px;top:336.30px;">.</div>
<div class="t" style="left:568.8px;top:336.30px;">nein</div>
<div class="abs" style="left:324.8px;top:345.8px;width:313px;height:7.5px;overflow:hidden;"><div class="t" style="left:3.9px;top:0.8px;">Absonderung kranker/verletzter Tiere</div><div class="t" style="left:168.8px;top:0.8px;">.</div><div class="t" style="left:244px;top:0.8px;">nein</div></div>
<div class="abs" style="left:774.8px;top:302.8px;width:6.1px;height:50.6px;background:#ededed;"></div>
<svg style="left:0;top:0" width="810" height="481" viewBox="0 0 810 481"><rect x="776.1" y="310.2" width="3.2" height="7" rx="1.6" fill="#adadad"/></svg>
<svg style="left:775.8px;top:304.8px" width="3.8" height="2.4" viewBox="0 0 3.8 2.4"><path d="M0 2.4 L1.9 0 L3.8 2.4 Z" fill="#a3a3a3"/></svg>
<svg style="left:775.8px;top:348.8px" width="3.8" height="2.4" viewBox="0 0 3.8 2.4"><path d="M0 0 L1.9 2.4 L3.8 0 Z" fill="#a3a3a3"/></svg>
<div class="p" style="left:324.3px;top:372.8px;width:457.3px;height:65px;"></div>
<div class="b" style="left:326.7px;top:374.90px;font-size:5.37px;">weitere Information</div>
<div class="abs" style="left:330.4px;top:387.40px;width:1.3px;height:1.3px;background:#8c8c8c;"></div>
<div class="lk" style="left:334.3px;top:383.10px;font-size:5.37px;">Tierbestand (Rinder, Schweine und Schafe/Ziegen)</div>
<div class="abs" style="left:330.4px;top:395.42px;width:1.3px;height:1.3px;background:#8c8c8c;"></div>
<div class="lk" style="left:334.3px;top:391.12px;font-size:5.37px;">Übernahmemeldung für Schweine</div>
<div class="abs" style="left:330.4px;top:403.44px;width:1.3px;height:1.3px;background:#8c8c8c;"></div>
<div class="lk" style="left:334.3px;top:399.14px;font-size:5.37px;">Übernahmemeldung für Schafe und Ziegen</div>
<div class="abs" style="left:330.4px;top:411.46px;width:1.3px;height:1.3px;background:#8c8c8c;"></div>
<div class="lk" style="left:334.3px;top:407.16px;font-size:5.37px;">Antibiotika-Einsatz</div>
<div class="abs" style="left:330.4px;top:419.48px;width:1.3px;height:1.3px;background:#8c8c8c;"></div>
<div class="lk" style="left:334.3px;top:415.18px;font-size:5.37px;">Schlachtbefunddaten</div>
<svg style="left:0;top:0" width="810" height="481" viewBox="0 0 810 481">
<circle cx="95.00" cy="95.50" r="5.4" fill="#d9312b"/>
<circle cx="181.50" cy="71.00" r="2.2" fill="#c9c9c9"/>
<circle cx="181.50" cy="78.87" r="2.2" fill="#25981c"/>
<circle cx="181.50" cy="86.74" r="2.2" fill="#f7ae28"/>
<circle cx="181.50" cy="94.61" r="2.2" fill="#d9312b"/>
<circle cx="172.50" cy="166.71" r="3.3" fill="#d9312b"/>
<circle cx="172.50" cy="177.03" r="3.3" fill="#f7ae28"/>
<circle cx="172.50" cy="187.35" r="3.3" fill="#25981c"/>
<circle cx="172.50" cy="197.67" r="3.3" fill="#25981c"/>
<circle cx="172.50" cy="207.99" r="3.3" fill="#d9312b"/>
<circle cx="172.50" cy="218.31" r="3.3" fill="#25981c"/>
<circle cx="172.50" cy="228.63" r="3.3" fill="#25981c"/>
<circle cx="172.50" cy="238.95" r="3.3" fill="#25981c"/>
<circle cx="172.50" cy="249.27" r="3.3" fill="#f7ae28"/>
<circle cx="172.50" cy="259.59" r="3.3" fill="#c9c9c9"/>
<circle cx="172.50" cy="269.91" r="3.3" fill="#c9c9c9"/>
<circle cx="172.50" cy="280.23" r="3.3" fill="#c9c9c9"/>
<circle cx="172.50" cy="290.55" r="3.3" fill="#25981c"/>
<circle cx="172.50" cy="300.87" r="3.3" fill="#f7ae28"/>
</svg>
<div class="t ft" style="left:16.9px;top:448.5px;">IDV Informationssysteme</div>
<div class="t ft" style="left:389.6px;top:448.5px;">© LANUV 2025</div>
<div class="t ft" style="right:15.6px;top:448.5px;">Impressum | Datenschutz</div>
</div>
</body>
</html>
